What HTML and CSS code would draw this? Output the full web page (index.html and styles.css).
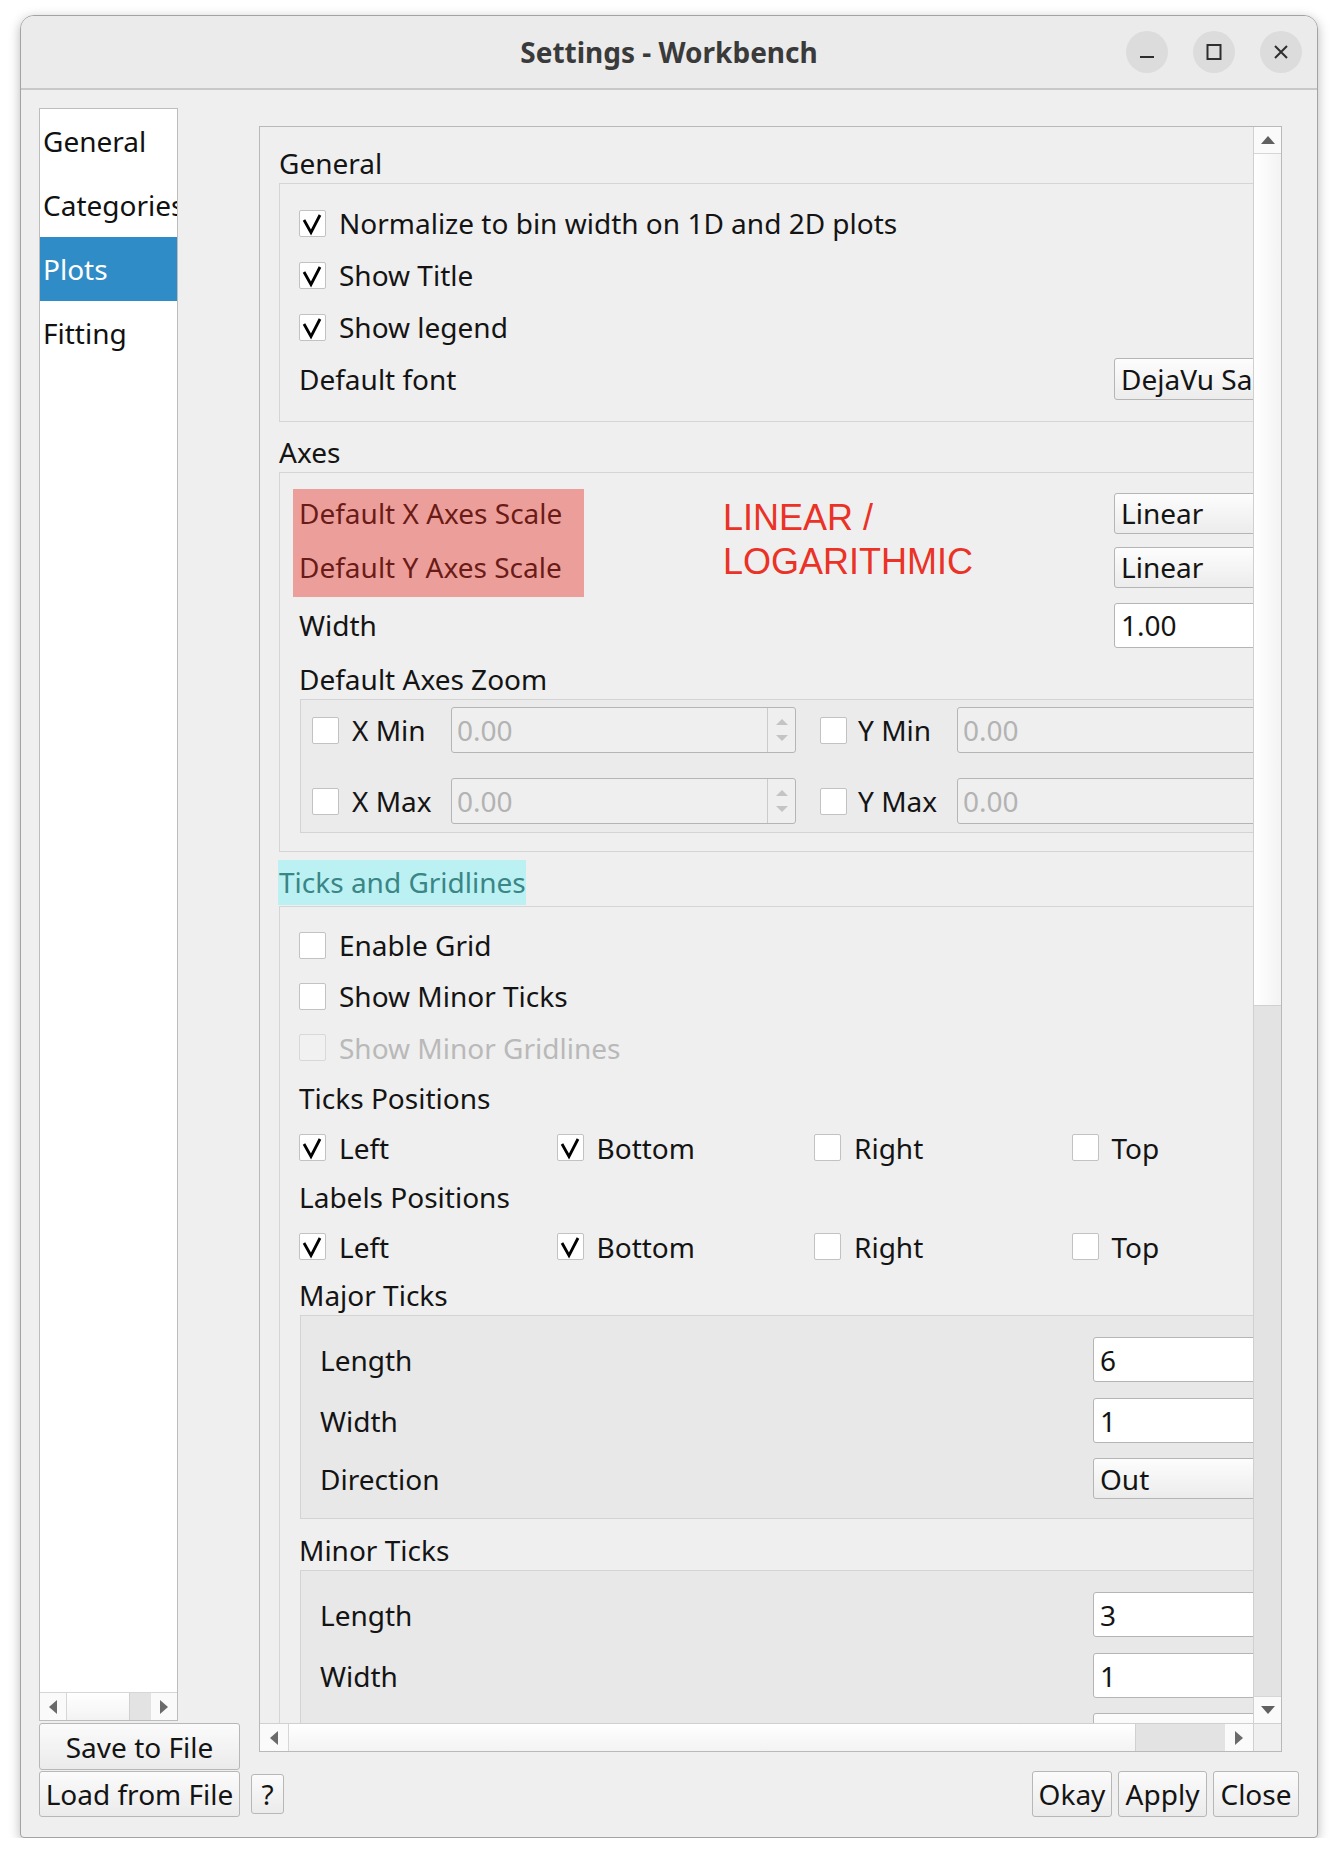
FILE: index.html
```html
<!DOCTYPE html>
<html>
<head>
<meta charset="utf-8">
<title>Settings - Workbench</title>
<link rel="stylesheet" href="styles.css">
</head>
<body>
<div class="window">
  <header class="titlebar">
    <div></div>
    <div class="title">Settings - Workbench</div>
    <div class="controls">
      <span class="ctl"><svg width="42" height="42" viewBox="0 0 42 42"><line x1="14" y1="26" x2="28" y2="26" stroke="#2e2e2e" stroke-width="2"/></svg></span>
      <span class="ctl"><svg width="42" height="42" viewBox="0 0 42 42"><rect x="14.5" y="14" width="13" height="14" fill="none" stroke="#2e2e2e" stroke-width="2"/></svg></span>
      <span class="ctl"><svg width="42" height="42" viewBox="0 0 42 42"><path d="M15 15 L27 27 M27 15 L15 27" stroke="#2e2e2e" stroke-width="2" fill="none"/></svg></span>
    </div>
  </header>

  <div class="main">
    <div class="top">
      <div class="leftcol">
        <div class="sidebar">
          <ul class="cats">
            <li>General</li>
            <li>Categories</li>
            <li class="sel">Plots</li>
            <li>Fitting</li>
          </ul>
          <div class="hbar small">
            <div class="sb-btn hb"><i class="tri left"></i></div>
            <div class="sb-handle h"></div>
            <div class="sb-groove"></div>
            <div class="sb-btn hb"><i class="tri right"></i></div>
          </div>
        </div>
        <button class="btn save">Save to File</button>
      </div>

      <div class="scrollframe">
        <div class="viewport">
          <div class="content">
            <div class="gtitle">General</div>
            <div class="group g-general">
              <div class="row h52"><span class="cb on"><svg width="27" height="27" viewBox="0 0 27 27"><path d="M5 10 L12 22.5 L21 5" fill="none" stroke="#000" stroke-width="2.8"/></svg></span><span class="lbl">Normalize to bin width on 1D and 2D plots</span></div>
              <div class="row h52"><span class="cb on"><svg width="27" height="27" viewBox="0 0 27 27"><path d="M5 10 L12 22.5 L21 5" fill="none" stroke="#000" stroke-width="2.8"/></svg></span><span class="lbl">Show Title</span></div>
              <div class="row h52"><span class="cb on"><svg width="27" height="27" viewBox="0 0 27 27"><path d="M5 10 L12 22.5 L21 5" fill="none" stroke="#000" stroke-width="2.8"/></svg></span><span class="lbl">Show legend</span></div>
              <div class="row h52"><span class="lbl grow">Default font</span><div class="combo field h42">DejaVu Sans</div></div>
            </div>

            <div class="gtitle mt10">Axes</div>
            <div class="group g-axes">
              <div class="scales">
                <div class="row h54"><span class="lbl grow">Default X Axes Scale</span><div class="combo field h41">Linear</div></div>
                <div class="row h54"><span class="lbl grow">Default Y Axes Scale</span><div class="combo field h41">Linear</div></div>
                <div class="note-hl"></div>
                <div class="note">LINEAR /<br>LOGARITHMIC</div>
              </div>
              <div class="row h52 mt5"><span class="lbl grow">Width</span><div class="edit field h45">1.00</div></div>
              <div class="sublabel">Default Axes Zoom</div>
              <div class="zoomframe">
                <div class="zrow">
                  <span class="cb"></span><span class="zl">X Min</span>
                  <div class="spin"><span class="sv">0.00</span><span class="sbtn"><i class="stri up"></i><i class="stri dn"></i></span></div>
                  <span class="cb cb2"></span><span class="zl">Y Min</span>
                  <div class="spin wide"><span class="sv">0.00</span></div>
                </div>
                <div class="zrow mt25">
                  <span class="cb"></span><span class="zl">X Max</span>
                  <div class="spin"><span class="sv">0.00</span><span class="sbtn"><i class="stri up"></i><i class="stri dn"></i></span></div>
                  <span class="cb cb2"></span><span class="zl">Y Max</span>
                  <div class="spin wide"><span class="sv">0.00</span></div>
                </div>
              </div>
            </div>

            <div class="gtitle tg"><span class="hl">Ticks and Gridlines</span></div>
            <div class="group g-ticks">
              <div class="row h50"><span class="cb"></span><span class="lbl">Enable Grid</span></div>
              <div class="row h52"><span class="cb"></span><span class="lbl">Show Minor Ticks</span></div>
              <div class="row h51 disabled"><span class="cb dis"></span><span class="lbl">Show Minor Gridlines</span></div>
              <div class="row h50"><span class="lbl">Ticks Positions</span></div>
              <div class="pos h49">
                <div class="pcell"><span class="cb on"><svg width="27" height="27" viewBox="0 0 27 27"><path d="M5 10 L12 22.5 L21 5" fill="none" stroke="#000" stroke-width="2.8"/></svg></span><span class="lbl">Left</span></div>
                <div class="pcell"><span class="cb on"><svg width="27" height="27" viewBox="0 0 27 27"><path d="M5 10 L12 22.5 L21 5" fill="none" stroke="#000" stroke-width="2.8"/></svg></span><span class="lbl">Bottom</span></div>
                <div class="pcell"><span class="cb"></span><span class="lbl">Right</span></div>
                <div class="pcell"><span class="cb"></span><span class="lbl">Top</span></div>
              </div>
              <div class="row h50"><span class="lbl">Labels Positions</span></div>
              <div class="pos h49">
                <div class="pcell"><span class="cb on"><svg width="27" height="27" viewBox="0 0 27 27"><path d="M5 10 L12 22.5 L21 5" fill="none" stroke="#000" stroke-width="2.8"/></svg></span><span class="lbl">Left</span></div>
                <div class="pcell"><span class="cb on"><svg width="27" height="27" viewBox="0 0 27 27"><path d="M5 10 L12 22.5 L21 5" fill="none" stroke="#000" stroke-width="2.8"/></svg></span><span class="lbl">Bottom</span></div>
                <div class="pcell"><span class="cb"></span><span class="lbl">Right</span></div>
                <div class="pcell"><span class="cb"></span><span class="lbl">Top</span></div>
              </div>

              <div class="sublabel2">Major Ticks</div>
              <div class="subframe">
                <div class="srow h45"><span class="lbl grow">Length</span><div class="edit sfield h45">6</div></div>
                <div class="srow h45 mt16"><span class="lbl grow">Width</span><div class="edit sfield h45">1</div></div>
                <div class="srow h41 mt15"><span class="lbl grow">Direction</span><div class="combo sfield h41">Out</div></div>
              </div>

              <div class="sublabel2 mt11">Minor Ticks</div>
              <div class="subframe">
                <div class="srow h45"><span class="lbl grow">Length</span><div class="edit sfield h45">3</div></div>
                <div class="srow h45 mt16"><span class="lbl grow">Width</span><div class="edit sfield h45">1</div></div>
                <div class="srow h41 mt15"><span class="lbl grow">Direction</span><div class="combo sfield h41">Out</div></div>
              </div>
            </div>
          </div>
        </div>

        <div class="vbar">
          <div class="sb-btn vb"><i class="tri up"></i></div>
          <div class="sb-handle v"></div>
          <div class="sb-groove"></div>
          <div class="sb-btn vb bottom"><i class="tri down"></i></div>
        </div>
        <div class="hbar main-h">
          <div class="sb-btn hb"><i class="tri left"></i></div>
          <div class="sb-handle h big"></div>
          <div class="sb-groove"></div>
          <div class="sb-btn hb"><i class="tri right"></i></div>
        </div>
        <div class="corner"></div>
      </div>
    </div>

    <div class="bottom">
      <button class="btn load">Load from File</button>
      <button class="btn help">?</button>
      <div class="spacer"></div>
      <button class="btn okay">Okay</button>
      <button class="btn apply">Apply</button>
      <button class="btn close">Close</button>
    </div>
  </div>
</div>
</body>
</html>
```

FILE: styles.css
```css
* { box-sizing: border-box; margin: 0; padding: 0; }
html, body { background: #ffffff; }
body {
  font-family: "Noto Sans", "DejaVu Sans", sans-serif;
  font-size: 28px;
  color: #141414;
}

.window {
  margin: 15px 0 0 20px;
  width: 1298px;
  height: 1823px;
  border: 1px solid #a3a3a3;
  border-radius: 14px 14px 4px 4px;
  background: #efefef;
  box-shadow: 0 3px 12px rgba(0, 0, 0, 0.28);
  overflow: hidden;
  display: flex;
  flex-direction: column;
}

/* title bar */
.titlebar {
  height: 74px;
  flex: none;
  display: grid;
  grid-template-columns: 1fr auto 1fr;
  align-items: center;
  background: #ebebeb;
  border-bottom: 2px solid #c8c8c8;
}
.title {
  font-weight: 700;
  font-size: 28px;
  line-height: 40px;
  color: #3a3a3a;
}
.controls {
  display: flex;
  justify-content: flex-end;
  gap: 25px;
  padding-right: 15px;
}
.ctl {
  width: 42px;
  height: 42px;
  border-radius: 50%;
  background: #dcdcdc;
  display: flex;
}

/* main area */
.main {
  flex: 1;
  display: flex;
  flex-direction: column;
  padding: 18px 18px 0 18px;
}
.top { display: flex; align-items: flex-start; }
.leftcol { width: 201px; flex: none; display: flex; flex-direction: column; }

.sidebar {
  width: 139px;
  height: 1613px;
  border: 1px solid #bdbdbd;
  background: #ffffff;
  display: flex;
  flex-direction: column;
}
.cats { list-style: none; flex: 1; overflow: hidden; }
.cats li {
  height: 64px;
  line-height: 64px;
  padding-left: 3px;
  white-space: nowrap;
  color: #111;
}
.cats li.sel { background: #308cc6; color: #ffffff; }

/* buttons */
.btn {
  font: inherit;
  color: #141414;
  border: 1px solid #b7b7b7;
  border-radius: 3px;
  background: linear-gradient(#fbfbfb, #ebebeb);
  height: 46px;
  line-height: 1;
  display: flex;
  align-items: center;
  justify-content: center;
  padding: 0;
  white-space: nowrap;
}
.btn.save { margin-top: 2px; width: 201px; height: 47px; }
.btn.load { width: 201px; }
.btn.help { width: 33px; height: 40px; margin-left: 11px; }
.btn.okay { width: 80px; }
.btn.apply { width: 89px; margin-left: 6px; }
.btn.close { width: 86px; margin-left: 6px; }
.bottom { display: flex; align-items: center; height: 46px; margin-top: 1px; }
.spacer { flex: 1; }

/* scroll frame */
.scrollframe {
  margin-left: 19px;
  margin-top: 18px;
  width: 1023px;
  height: 1626px;
  flex: none;
  border: 1px solid #b9b9b9;
  display: grid;
  grid-template-columns: 993px 28px;
  grid-template-rows: 1596px 28px;
}
.viewport { overflow: hidden; background: #efefef; }
.content { width: 1220px; padding: 16px 19px 0 19px; }

/* scrollbars */
.vbar {
  display: flex;
  flex-direction: column;
  border-left: 1px solid #d0d0d0;
  background: #e3e3e3;
}
.hbar {
  display: flex;
  border-top: 1px solid #d0d0d0;
  background: #e3e3e3;
}
.hbar.small { height: 28px; flex: none; border-top: 1px solid #d6d6d6; }
.corner { background: #efefef; border-left: 1px solid #d0d0d0; border-top: 1px solid #d0d0d0; }
.sb-btn {
  background: #fafafa;
  display: flex;
  align-items: center;
  justify-content: center;
  flex: none;
}
.sb-btn.vb { height: 27px; border-bottom: 1px solid #d6d6d6; }
.sb-btn.vb.bottom { border-bottom: none; border-top: 1px solid #d6d6d6; }
.sb-btn.hb { width: 28px; }
.hbar.small .sb-btn.hb { width: 26px; }
.sb-handle.v {
  height: 852px;
  flex: none;
  background: linear-gradient(90deg, #ffffff, #f3f3f3);
  border-bottom: 1px solid #d0d0d0;
}
.sb-handle.h {
  width: 64px;
  flex: none;
  background: linear-gradient(#ffffff, #f3f3f3);
  border-left: 1px solid #d6d6d6;
  border-right: 1px solid #d0d0d0;
}
.sb-handle.h.big { width: 848px; }
.sb-groove { flex: 1; background: #e3e3e3; }
.tri { display: block; width: 0; height: 0; }
.tri.up { border-left: 7px solid transparent; border-right: 7px solid transparent; border-bottom: 8px solid #606060; }
.tri.down { border-left: 7px solid transparent; border-right: 7px solid transparent; border-top: 8px solid #606060; }
.tri.left { border-top: 7px solid transparent; border-bottom: 7px solid transparent; border-right: 8px solid #6a6a6a; }
.tri.right { border-top: 7px solid transparent; border-bottom: 7px solid transparent; border-left: 8px solid #6a6a6a; }

/* groups */
.gtitle { height: 40px; line-height: 40px; white-space: nowrap; }
.mt10 { margin-top: 10px; }
.mt5 { margin-top: 5px; }
.mt11 { margin-top: 11px; }
.mt15 { margin-top: 15px; }
.mt16 { margin-top: 16px; }
.mt25 { margin-top: 25px; }
.group {
  border: 1px solid #d5d5d5;
  padding: 13px 19px 16px 19px;
}
.g-axes { padding-bottom: 18px; }
.g-ticks { border-bottom: none; padding-bottom: 0; }

.row { display: flex; align-items: center; white-space: nowrap; }
.h41 { height: 41px; }
.h42 { height: 42px; }
.h45 { height: 45px; }
.h49 { height: 49px; }
.h50 { height: 50px; }
.h51 { height: 51px; }
.h52 { height: 52px; }
.h54 { height: 54px; }
.lbl { white-space: nowrap; }
.grow { flex: 1; }

.cb {
  width: 27px;
  height: 27px;
  flex: none;
  background: #ffffff;
  border: 1px solid #c2c2c2;
  border-radius: 2px;
  margin-right: 13px;
  display: flex;
}
.cb svg { display: block; margin: -1px; }
.cb.dis { background: #f1f1f1; border-color: #d8d8d8; }
.disabled .lbl { color: #b9b9b9; }

.field { width: 327px; flex: none; }
.sfield { width: 328px; flex: none; }
.combo {
  border: 1px solid #b5b5b5;
  border-radius: 3px;
  background: linear-gradient(#fdfdfd, #ececec);
  padding-left: 6px;
  display: flex;
  align-items: center;
  white-space: nowrap;
  overflow: hidden;
}
.edit {
  border: 1px solid #b5b5b5;
  border-radius: 3px;
  background: #ffffff;
  padding-left: 6px;
  display: flex;
  align-items: center;
  white-space: nowrap;
}

/* axes scale annotation */
.scales { position: relative; }
.note-hl {
  position: absolute;
  left: -6px;
  top: 3px;
  width: 291px;
  height: 108px;
  background: rgba(232, 40, 28, 0.4);
  pointer-events: none;
}
.note {
  position: absolute;
  left: 424px;
  top: 10px;
  font-family: "Liberation Sans", Arial, sans-serif;
  font-size: 36px;
  line-height: 44px;
  color: #ea3326;
  white-space: nowrap;
}

.sublabel { height: 48px; padding-top: 9px; line-height: 39px; white-space: nowrap; }
.zoomframe {
  margin-left: 1px;
  border: 1px solid #d3d3d3;
  background: #ebebeb;
  padding: 7px 11px 8px 11px;
}
.zrow { display: flex; align-items: center; height: 46px; white-space: nowrap; }
.zl { width: 99px; flex: none; }
.cb2 { margin-left: 24px; margin-right: 11px; }
.spin {
  width: 345px;
  height: 46px;
  flex: none;
  border: 1px solid #b5b5b5;
  border-radius: 3px;
  background: #efefef;
  display: flex;
  align-items: center;
}
.spin.wide { width: 500px; }
.sv { flex: 1; padding-left: 5px; color: #b3b3b3; }
.sbtn {
  width: 28px;
  height: 100%;
  border-left: 1px solid #cbcbcb;
  display: flex;
  flex-direction: column;
  align-items: center;
  justify-content: center;
  gap: 10px;
}
.stri { display: block; width: 0; height: 0; }
.stri.up { border-left: 6px solid transparent; border-right: 6px solid transparent; border-bottom: 6px solid #c4c4c4; }
.stri.dn { border-left: 6px solid transparent; border-right: 6px solid transparent; border-top: 6px solid #c4c4c4; }

/* ticks */
.gtitle.tg { margin-top: 8px; height: 46px; line-height: 45px; }
.hl {
  display: inline-block;
  height: 45px;
  width: 248px;
  margin-left: -1px;
  padding-left: 1px;
  background: #bbf1f3;
  color: #3a8585;
}
.pos {
  display: grid;
  grid-template-columns: repeat(4, 257.5px);
  align-items: center;
}
.pcell { display: flex; align-items: center; white-space: nowrap; }
.sublabel2 { margin-top: 4px; height: 40px; line-height: 40px; white-space: nowrap; }
.sublabel2.mt11 { margin-top: 11px; }
.subframe {
  margin-left: 1px;
  border: 1px solid #d3d3d3;
  background: #e8e8e8;
  padding: 21px 19px 19px 19px;
}
.srow { display: flex; align-items: center; white-space: nowrap; }
```
